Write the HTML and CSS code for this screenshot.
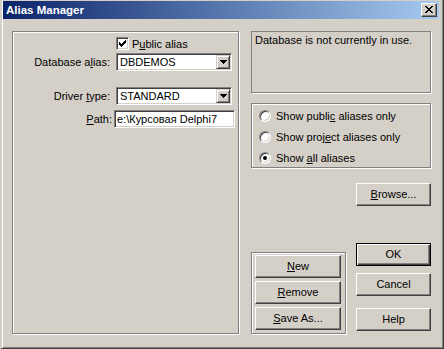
FILE: index.html
```
<!DOCTYPE html>
<html>
<head>
<meta charset="utf-8">
<link rel="stylesheet" href="styles.css">
</head>
<body>
<div class="window">
  <div class="titlebar">
    <span class="title">Alias Manager</span>
    <div class="closebtn">
      <svg width="8" height="7" viewBox="0 0 8 7"><path d="M0 0h2v1h-2zM6 0h2v1h-2zM1 1h2v1h-2zM5 1h2v1h-2zM2 2h4v1h-4zM3 3h2v1h-2zM2 4h4v1h-4zM1 5h2v1h-2zM5 5h2v1h-2zM0 6h2v1h-2zM6 6h2v1h-2z" fill="#000"/></svg>
    </div>
  </div>
  <div class="client">
    <div class="group left-group">
      <div class="chk-row">
        <span class="checkbox"><svg width="7" height="7" viewBox="0 0 7 7"><path d="M6 0v1h-1v1h-1v1h-1v1h-1v-1h-1v-1h-1v3h1v1h1v1h1v-1h1v-1h1v-1h1v-1h1v-3z" fill="#000"/></svg></span>
        <span class="chk-label">P<u>u</u>blic alias</span>
      </div>
      <div class="field-row row-db">
        <span class="lbl">Database a<u>l</u>ias:</span>
        <div class="combo"><span class="combo-text">DBDEMOS</span><span class="drop"><svg width="7" height="4" viewBox="0 0 7 4"><path d="M0 0h7v1h-1v1h-1v1h-1v1h-1v-1h-1v-1h-1v-1h-1z" fill="#000"/></svg></span></div>
      </div>
      <div class="field-row row-drv">
        <span class="lbl">Driver <u>t</u>ype:</span>
        <div class="combo"><span class="combo-text">STANDARD</span><span class="drop"><svg width="7" height="4" viewBox="0 0 7 4"><path d="M0 0h7v1h-1v1h-1v1h-1v1h-1v-1h-1v-1h-1v-1h-1z" fill="#000"/></svg></span></div>
      </div>
      <div class="field-row row-path">
        <span class="lbl lbl-path"><u>P</u>ath:</span>
        <div class="edit">e:\Курсовая Delphi7</div>
      </div>
    </div>
    <div class="right">
      <div class="info">Database is not currently in use.</div>
      <div class="group radios">
        <div class="radio-row"><span class="radio"></span><span>Show publi<u>c</u> aliases only</span></div>
        <div class="radio-row"><span class="radio"></span><span>Show proj<u>e</u>ct aliases only</span></div>
        <div class="radio-row"><span class="radio checked"></span><span>Show <u>a</u>ll aliases</span></div>
      </div>
      <div class="bottom">
        <div class="group btn-group">
          <div class="btn wide"><span><u>N</u>ew</span></div>
          <div class="btn wide"><span><u>R</u>emove</span></div>
          <div class="btn wide"><span><u>S</u>ave As...</span></div>
        </div>
        <div class="btn-col">
          <div class="btn browse"><span><u>B</u>rowse...</span></div>
          <div class="btn default ok"><span>OK</span></div>
          <div class="btn cancel"><span>Cancel</span></div>
          <div class="btn help"><span>Help</span></div>
        </div>
      </div>
    </div>
  </div>
</div>
</body>
</html>
```
FILE: styles.css
```
* { box-sizing: border-box; }
html, body { margin: 0; padding: 0; background: #D4D0C8; }
body { font-family: "Liberation Sans", Arial, sans-serif; font-size: 11px; color: #000; }
u { text-decoration: underline; text-underline-offset: 1px; }

.window {
  width: 444px; height: 349px;
  background: #D4D0C8;
  border-style: solid;
  border-width: 0 1px 1px 2px;
  border-color: #D4D0C8 #404040 #404040 #D4D0C8;
  box-shadow: inset 1px 0 0 #fff, inset -1px -1px 0 #808080;
  padding: 1px 4px 0 1px;
  display: flex; flex-direction: column;
}

.titlebar {
  height: 18px;
  background: linear-gradient(to right, #0A246A, #A6CAF0);
  display: flex; align-items: center; justify-content: space-between;
  padding: 0 2px 0 3px;
}
.title {
  color: #fff; font-weight: bold; font-size: 11.5px;
  font-family: "Liberation Sans", Arial, sans-serif;
}
.closebtn {
  width: 16px; height: 14px;
  background: #D4D0C8;
  border: 1px solid; border-color: #fff #404040 #404040 #fff;
  box-shadow: inset -1px -1px 0 #808080;
  display: flex; align-items: center; justify-content: center;
  padding: 0 1px 1px 0;
}
.closebtn svg { display: block; }

.client { display: flex; align-items: flex-start; padding: 12px 0 0 9px; }

.group {
  border: 1px solid #808080;
  box-shadow: inset 1px 1px 0 #fff, 1px 1px 0 #fff;
}
.left-group {
  width: 227px; height: 303px;
  margin-right: 12px;
  display: flex; flex-direction: column;
}
.chk-row {
  display: flex; align-items: center;
  margin-top: 5px; padding-left: 103px; height: 13px;
}
.checkbox {
  width: 13px; height: 13px; background: #fff;
  border: 1px solid; border-color: #808080 #fff #fff #808080;
  box-shadow: inset 1px 1px 0 #404040, inset -1px -1px 0 #D4D0C8;
  display: flex; align-items: center; justify-content: center;
}
.checkbox svg { display: block; }
.chk-label { margin-left: 3px; }

.field-row { display: flex; align-items: center; }
.lbl { width: 97px; text-align: right; margin-right: 6px; }
.lbl-path { width: 99px; margin-right: 2px; }
.row-db { margin-top: 3px; }
.row-drv { margin-top: 16px; }
.row-path { margin-top: 5px; }

.combo, .edit {
  background: #fff;
  border: 1px solid; border-color: #808080 #fff #fff #808080;
  box-shadow: inset 1px 1px 0 #404040, inset -1px -1px 0 #D4D0C8;
}
.combo {
  width: 116px; height: 18px;
  display: flex; align-items: center; justify-content: space-between;
  padding: 1px 1px 1px 2px;
}
.combo-text { padding-left: 1px; }
.drop {
  width: 14px; height: 14px;
  background: #D4D0C8;
  border: 1px solid; border-color: #D4D0C8 #404040 #404040 #D4D0C8;
  box-shadow: inset 1px 1px 0 #fff, inset -1px -1px 0 #808080;
  display: flex; align-items: center; justify-content: center;
}
.drop svg { display: block; }
.edit {
  width: 121px; height: 18px;
  padding: 0 0 0 2px;
  display: flex; align-items: center;
  white-space: nowrap; overflow: hidden;
}

.right { width: 180px; height: 303px; display: flex; flex-direction: column; }
.info {
  height: 62px;
  border: 1px solid #808080;
  box-shadow: 1px 1px 0 #fff;
  padding: 2px 3px;
  line-height: 13px;
}
.radios {
  margin-top: 10px; height: 65px;
  display: flex; flex-direction: column;
  padding: 5px 0 0 7px; gap: 8px;
}
.radio-row { display: flex; align-items: center; height: 13px; }
.radio-row span:last-child { margin-left: 5px; }
.radio {
  width: 12px; height: 12px; border-radius: 50%;
  background: #fff;
  border: 1px solid; border-color: #808080 #fff #fff #808080;
  box-shadow: inset 1px 1px 0 #404040, inset -1px -1px 0 #D4D0C8;
  display: flex; align-items: center; justify-content: center;
}
.radio.checked::after {
  content: ""; width: 4px; height: 4px; border-radius: 50%; background: #000;
}

.bottom { flex: 1; display: flex; align-items: flex-end; }
.btn-group {
  width: 95px; height: 82px;
  padding: 2px 0 0 3px;
  display: flex; flex-direction: column; gap: 3px;
}
.btn-col { margin-left: 10px; width: 75px; align-self: stretch; display: flex; flex-direction: column; }

.btn {
  height: 23px;
  background: #D4D0C8;
  border: 1px solid; border-color: #fff #404040 #404040 #fff;
  box-shadow: inset -1px -1px 0 #808080, inset 1px 1px 0 #D4D0C8;
  display: flex; align-items: center; justify-content: center;
  padding-bottom: 1px;
}
.btn.wide { width: 86px; }
.btn.default {
  border: 1px solid #000;
  box-shadow: inset 1px 1px 0 #fff, inset -1px -1px 0 #404040, inset -2px -2px 0 #808080;
}
.browse { margin-top: 15px; }
.ok { margin-top: 37px; }
.cancel { margin-top: 7px; }
.help { margin-top: 12px; }
```
